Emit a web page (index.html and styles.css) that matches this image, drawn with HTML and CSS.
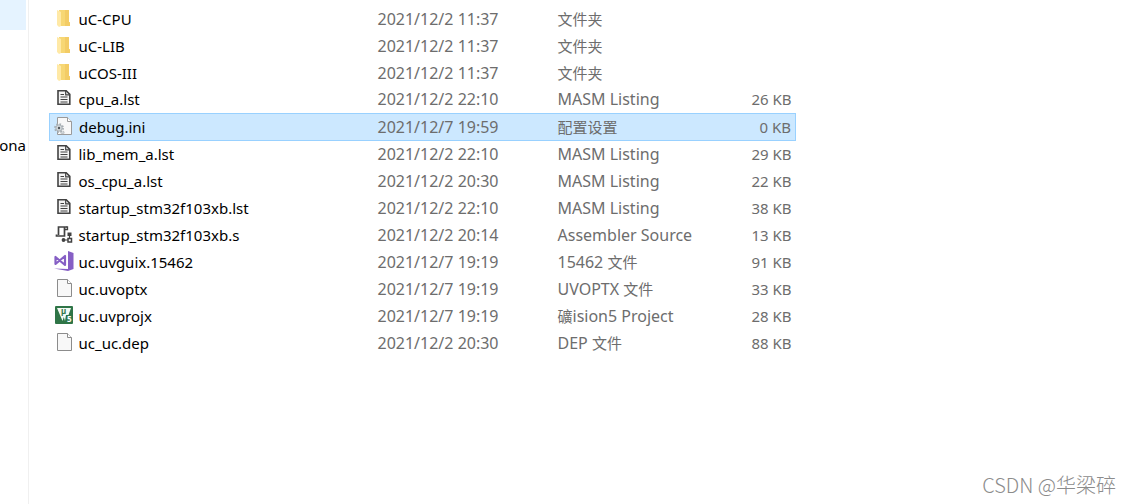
FILE: index.html
```html
<!DOCTYPE html>
<html lang="zh-CN">
<head>
    <meta charset="UTF-8">
    <title>uc</title>
    <meta name="viewport" content="width=device-width, initial-scale=1.0">
    <link rel="stylesheet" href="styles.css">
</head>
<body>
    <svg class="sprite" aria-hidden="true">
        <symbol id="folder" viewBox="0 0 20 20">
            <path d="M5 2h10v12h1v4H5z" fill="#f7d774"/>
            <path d="M11 2h4v12l1 1v3h-5z" fill="#f3cc66"/>
            <path d="M3 2l4 2v14l-2 1-2-2z" fill="#ffe9a6"/>
        </symbol>
        <symbol id="listing" viewBox="0 0 20 20">
            <path d="M4 2.800h8.200l3.600 3.600v9.800H4z" fill="#f4f4f4" stroke="#424242" stroke-width="1.600"/>
            <path d="M11.700 2.500v4.300h4.300" fill="none" stroke="#424242" stroke-width="1.200"/>
            <path d="M6.500 6.500h3.500M6.500 9h7M6.500 11.500h7M6.500 14h7" stroke="#424242" stroke-width="1.200"/>
        </symbol>
        <symbol id="page" viewBox="0 0 20 20">
            <path d="M3.500 1.500h10l4 4v13h-14z" fill="#f8f8f8" stroke="#8c8c8c"/>
            <path d="M13.500 1.500v4h4" fill="#fff" stroke="#8c8c8c"/>
        </symbol>
        <symbol id="config" viewBox="0 0 20 20">
            <path d="M3.500 1.500h10l4 4v13h-14z" fill="#f8f8f8" stroke="#9a9a9a"/>
            <path d="M13.500 1.500v4h4" fill="#fff" stroke="#9a9a9a"/>
            <circle cx="5" cy="12" r="4" fill="none" stroke="#a3abb1" stroke-width="1.800" stroke-dasharray="1.600 1.540"/>
            <circle cx="5" cy="12" r="3.200" fill="#d3d8db" stroke="#a8b0b5"/>
            <circle cx="5" cy="12" r="1.200" fill="#4f565b"/>
            <circle cx="8.500" cy="16.500" r="1.600" fill="#d3d8db" stroke="#9aa2a8" stroke-dasharray="1 .8"/>
        </symbol>
        <symbol id="assembler" viewBox="0 0 20 20">
            <path d="M4.500 11V3h8M10.500 3v9H2.500v-1.500" fill="none" stroke="#424242" stroke-width="1.700"/>
            <path d="M12 3h1.500v2.500H11" fill="none" stroke="#424242" stroke-width="1.300"/>
            <path d="M9 16h5M15.500 10v5" stroke="#424242" stroke-width="1.200"/>
            <circle cx="9.500" cy="16" r="1.900" fill="#424242"/>
            <rect x="13.500" y="8.500" width="4" height="3.500" fill="#424242"/>
            <rect x="14" y="14.500" width="3.500" height="3.500" fill="#fff" stroke="#424242" stroke-width="1.500"/>
        </symbol>
        <symbol id="studio" viewBox="0 0 20 20">
            <path d="M14 0l5.500 2v16L14 20 0 17.500l14 .5z" fill="#865fc5"/>
            <path d="M1.500 6v7L11 5v9z" fill="none" stroke="#865fc5" stroke-width="2.200" stroke-linejoin="round"/>
        </symbol>
        <symbol id="uvision" viewBox="0 0 20 20">
            <rect x="1" y="1" width="18" height="18" rx="1" fill="#2f7547"/>
            <path d="M3 3h14l-2.500 7h-2.500L11 16 9.800 12 8.500 16z" fill="#f4faf5"/>
            <text x="7" y="9" class="mark mark-green">µ</text>
            <text x="13" y="17" class="mark">5</text>
        </symbol>
    </svg>

    <div class="explorer">
        <aside class="tree">
            <div class="tree-active"></div>
            <div class="tree-label">ona</div>
        </aside>

        <main class="files">
            <table>
                <colgroup>
                    <col class="col-name">
                    <col class="col-date">
                    <col class="col-type">
                    <col class="col-size">
                </colgroup>
                <tbody id="lista"></tbody>
            </table>
        </main>

        <div class="watermark">CSDN @华梁碎</div>
    </div>

    <script>
        const files = [
            ['folder', 'uC-CPU', '2021/12/2 11:37', '文件夹', ''],
            ['folder', 'uC-LIB', '2021/12/2 11:37', '文件夹', ''],
            ['folder', 'uCOS-III', '2021/12/2 11:37', '文件夹', ''],
            ['listing', 'cpu_a.lst', '2021/12/2 22:10', 'MASM Listing', '26 KB'],
            ['config', 'debug.ini', '2021/12/7 19:59', '配置设置', '0 KB'],
            ['listing', 'lib_mem_a.lst', '2021/12/2 22:10', 'MASM Listing', '29 KB'],
            ['listing', 'os_cpu_a.lst', '2021/12/2 20:30', 'MASM Listing', '22 KB'],
            ['listing', 'startup_stm32f103xb.lst', '2021/12/2 22:10', 'MASM Listing', '38 KB'],
            ['assembler', 'startup_stm32f103xb.s', '2021/12/2 20:14', 'Assembler Source', '13 KB'],
            ['studio', 'uc.uvguix.15462', '2021/12/7 19:19', '15462 文件', '91 KB'],
            ['page', 'uc.uvoptx', '2021/12/7 19:19', 'UVOPTX 文件', '33 KB'],
            ['uvision', 'uc.uvprojx', '2021/12/7 19:19', '礦ision5 Project', '28 KB'],
            ['page', 'uc_uc.dep', '2021/12/2 20:30', 'DEP 文件', '88 KB']
        ];
        const selected = 'debug.ini';

        document.getElementById('lista').innerHTML = files.map(([icon, name, date, type, size]) => `
            <tr class="${name === selected ? 'selected' : ''}">
                <td class="name"><div class="file"><svg class="icon"><use href="#${icon}"/></svg>${name}</div></td>
                <td>${date}</td>
                <td>${type.replace(/[\u4e00-\u9fff]+/g, '<span class="han">$&</span>')}</td>
                <td class="size">${size}</td>
            </tr>
        `).join('');
    </script>
</body>
</html>
```
FILE: styles.css
```css
body {
    margin: 0;
    background-color: #fff;
    color: #000;
    font-family: "Noto Sans", "Noto Sans CJK SC", sans-serif;
    font-size: 15px;
    line-height: 20px;
}

.sprite {
    display: none;
}

.explorer {
    display: flex;
    position: relative;
    min-height: 100vh;
}

.tree {
    flex: none;
    width: 28px;
    border-right: 1px solid #f0f0f0;
}

.tree-active {
    width: 26px;
    height: 30px;
    background-color: #e5f3ff;
}

.tree-label {
    display: flex;
    justify-content: flex-end;
    width: 26px;
    margin-top: 105px;
}

.files {
    flex: 1;
    padding: 5px 20px;
}

table {
    table-layout: fixed;
    width: 747px;
    border-collapse: collapse;
}

.col-name {
    width: 324px;
}

.col-date {
    width: 180px;
}

.col-type {
    width: 160px;
}

td {
    height: 27px;
    padding: 0 4px;
    box-sizing: border-box;
    color: #6d6d6d;
    font-size: 16px;
    white-space: nowrap;
}

.name {
    color: #000;
    font-size: 15px;
}

.file {
    display: flex;
    align-items: center;
    gap: 5px;
}

.icon {
    flex: none;
    width: 20px;
    height: 20px;
    margin-bottom: 2px;
}

.han {
    font-size: 15px;
}

.size {
    font-size: 15px;
    text-align: right;
}

.selected {
    background-color: #cce8ff;
    border: 1px solid #99d1ff;
}

.mark {
    font-size: 8px;
    font-weight: bold;
    fill: #fff;
}

.mark-green {
    fill: #2f7547;
}

.watermark {
    position: absolute;
    right: 15px;
    bottom: 6px;
    color: #8c8c8c;
    font-family: "Noto Sans CJK SC", sans-serif;
    font-size: 20px;
    font-weight: 300;
    line-height: 26px;
}
```
